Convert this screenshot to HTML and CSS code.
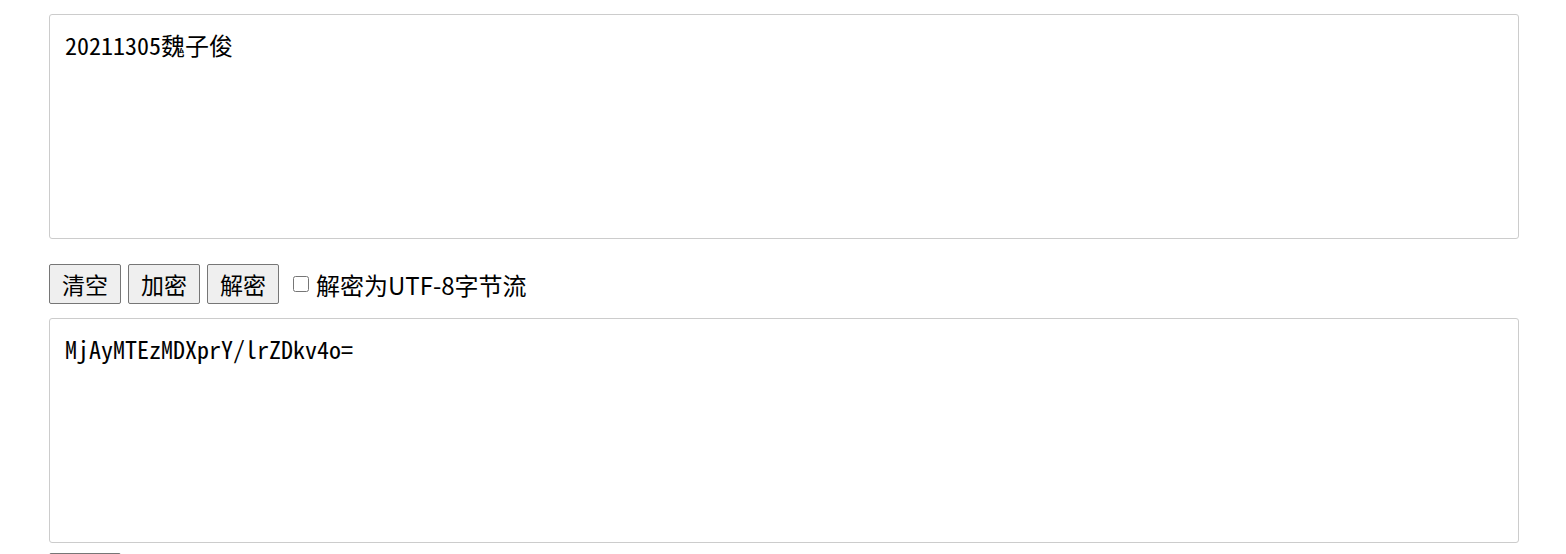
FILE: index.html
```html
<!DOCTYPE html>
<html lang="zh">
<head>
<meta charset="utf-8">
<title>Base64</title>
<link rel="stylesheet" href="styles.css">
</head>
<body>
<div class="page">
  <textarea class="box box-top">20211305魏子俊</textarea>
  <div class="controls">
    <button class="btn">清空</button>
    <button class="btn">加密</button>
    <button class="btn">解密</button>
    <label class="opt"><input type="checkbox" class="chk">解密为UTF-8字节流</label>
  </div>
  <textarea class="box box-bottom">MjAyMTEzMDXprY/lrZDkv4o=</textarea>
  <div class="controls2">
    <button class="btn btn-cut">复制</button>
  </div>
</div>
</body>
</html>
```

FILE: styles.css
```css
html, body {
  margin: 0;
  padding: 0;
  background: #fff;
  overflow: hidden;
}
.page {
  display: flex;
  flex-direction: column;
  padding: 14px 0 0 49px;
  width: 1470px;
}
.box {
  box-sizing: border-box;
  width: 1470px;
  height: 225px;
  margin: 0;
  padding: 14px 15px;
  border: 1px solid #cccccc;
  border-radius: 3px;
  resize: none;
  font-family: "Noto Sans Mono CJK SC", "Liberation Mono", monospace;
  font-size: 24px;
  line-height: 32px;
  color: #000;
  outline: none;
}
.controls {
  display: flex;
  align-items: center;
  gap: 7px;
  margin-top: 25px;
  height: 40px;
}
.controls2 {
  display: flex;
  margin-top: 10px;
}
.btn {
  box-sizing: border-box;
  width: 72px;
  height: 40px;
  padding: 0;
  margin: 0;
  font-family: "Noto Sans CJK SC", sans-serif;
  font-size: 23px;
  color: #000;
  background: #efefef;
  border: 1px solid #767676;
  border-radius: 2px;
}
.btn-cut {
  align-items: flex-end;
}
.opt {
  display: flex;
  align-items: center;
  font-family: "Noto Sans CJK SC", sans-serif;
  font-size: 24px;
  color: #000;
  margin-left: 7px;
}
.chk {
  width: 16px;
  height: 16px;
  margin: 0 7px 0 0;
}
.box-bottom {
  margin-top: 14px;
}
```
